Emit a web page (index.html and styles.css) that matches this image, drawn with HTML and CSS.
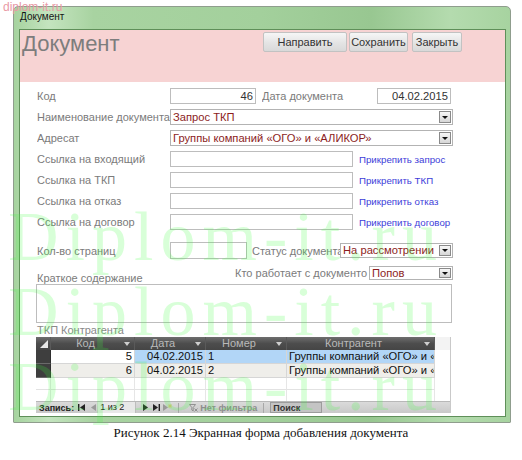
FILE: index.html
```html
<!DOCTYPE html>
<html lang="ru">
<head>
<meta charset="utf-8">
<title>Документ</title>
<link rel="stylesheet" href="styles.css">
</head>
<body>
<div class="page">
  <div class="wm-small">diplom-it.ru</div>
  <div class="window">
    <div class="titlebar">Документ</div>
    <div class="client">
      <div class="header">
        <div class="title">Документ</div>
        <div class="buttons">
          <div class="btn b1">Направить</div>
          <div class="btn b2">Сохранить</div>
          <div class="btn b3">Закрыть</div>
        </div>
      </div>
      <div class="form">
        <div class="row first">
          <div class="lbl">Код</div>
          <div class="fld w86 num">46</div>
          <div class="lbl lbl2">Дата документа</div>
          <div class="fld w74 num">04.02.2015</div>
        </div>
        <div class="row">
          <div class="lbl">Наименование документа</div>
          <div class="combo w283"><div class="v">Запрос ТКП</div><div class="dd"></div></div>
        </div>
        <div class="row">
          <div class="lbl">Адресат</div>
          <div class="combo w283"><div class="v">Группы компаний «ОГО» и «АЛИКОР»</div><div class="dd"></div></div>
        </div>
        <div class="row">
          <div class="lbl">Ссылка на входящий</div>
          <div class="fld w183"></div>
          <div class="link">Прикрепить запрос</div>
        </div>
        <div class="row">
          <div class="lbl">Ссылка на ТКП</div>
          <div class="fld w183"></div>
          <div class="link">Прикрепить ТКП</div>
        </div>
        <div class="row">
          <div class="lbl">Ссылка на отказ</div>
          <div class="fld w183"></div>
          <div class="link">Прикрепить отказ</div>
        </div>
        <div class="row">
          <div class="lbl">Ссылка на договор</div>
          <div class="fld w183"></div>
          <div class="link">Прикрепить договор</div>
        </div>
        <div class="row r8">
          <div class="lbl">Кол-во страниц</div>
          <div class="fld w77"></div>
          <div class="lbl lbl3">Статус документа</div>
          <div class="combo w113 h15"><div class="v">На рассмотрении</div><div class="dd"></div></div>
        </div>
        <div class="r9">
          <div class="kr">Краткое содержание</div>
          <div class="r9g">
            <div class="lbl lbl4">Кто работает с документо</div>
            <div class="combo w84 h14"><div class="v">Попов</div><div class="dd"></div></div>
          </div>
        </div>
        <div class="memo"></div>
        <div class="sublbl">ТКП Контрагента</div>
        <div class="sub">
          <div class="dr dh">
            <div class="hc hsel"><span class="tri"></span></div>
            <div class="hc"><span class="ht">Код</span><span class="arr"></span></div>
            <div class="hc"><span class="ht">Дата</span><span class="arr"></span></div>
            <div class="hc"><span class="ht">Номер</span><span class="arr"></span></div>
            <div class="hc"><span class="ht">Контрагент</span><span class="arr"></span></div>
            <div class="hc hrest"></div>
          </div>
          <div class="dr d1">
            <div class="c csel"></div>
            <div class="c r cw">5</div>
            <div class="c r cb">04.02.2015</div>
            <div class="c cb">1</div>
            <div class="c cb">Группы компаний «ОГО» и «АЛИКОР»</div>
            <div class="c ce"></div>
          </div>
          <div class="dr d2">
            <div class="c csel"></div>
            <div class="c r">6</div>
            <div class="c r">04.02.2015</div>
            <div class="c">2</div>
            <div class="c">Группы компаний «ОГО» и «АЛИКОР»</div>
            <div class="c ce"></div>
          </div>
          <div class="dr de">
            <div class="c"></div><div class="c"></div><div class="c"></div><div class="c"></div><div class="c"></div><div class="c ce"></div>
          </div>
          <div class="dr de">
            <div class="c"></div><div class="c"></div><div class="c"></div><div class="c"></div><div class="c"></div><div class="c ce"></div>
          </div>
          <div class="nav">
            <span class="nl">Запись:</span>
            <svg class="ic i1" width="7" height="7" viewBox="0 0 7 7"><rect x="0" y="0" width="1.4" height="7" fill="#222"/><polygon points="7,0 2,3.5 7,7" fill="#222"/></svg>
            <svg class="ic i2" width="5" height="7" viewBox="0 0 5 7"><polygon points="5,0 0,3.5 5,7" fill="#9a9a9a"/></svg>
            <span class="pos">1 из 2</span>
            <svg class="ic i3" width="5" height="7" viewBox="0 0 5 7"><polygon points="0,0 5,3.5 0,7" fill="#222"/></svg>
            <svg class="ic i4" width="7" height="7" viewBox="0 0 7 7"><polygon points="0,0 5,3.5 0,7" fill="#222"/><rect x="5.6" y="0" width="1.4" height="7" fill="#222"/></svg>
            <svg class="ic i5" width="9" height="7" viewBox="0 0 9 7"><polygon points="0,0 5,3.5 0,7" fill="#9a9a9a"/><path d="M7 0v4M5 2h4M5.6 0.6l2.8 2.8M8.4 0.6l-2.8 2.8" stroke="#d8c27a" stroke-width="0.9"/></svg>
            <span class="sep"></span>
            <svg class="ic i6" width="9" height="8" viewBox="0 0 9 8"><path d="M0.5 0.5h6l-2.3 3v3.5l-1.4 -1v-2.5z" fill="none" stroke="#8a8a8a" stroke-width="0.9"/><path d="M5.5 4.5l3 3M8.5 4.5l-3 3" stroke="#8a8a8a" stroke-width="0.9"/></svg>
            <span class="nf">Нет фильтра</span>
            <span class="sep"></span>
            <span class="srch">Поиск</span>
          </div>
        </div>
      </div>
    </div>
  </div>
  <div class="caption">Рисунок 2.14 Экранная форма добавления документа</div>
  <div class="wm wm1">Diplom-it.ru</div>
  <div class="wm wm2">Diplom-it.ru</div>
  <div class="wm wm3">Diplom-it.ru</div>
</div>
</body>
</html>
```
FILE: styles.css
```css
* { box-sizing: border-box; }
html, body { margin: 0; padding: 0; background: #fff; }
body {
  font-family: "Liberation Sans", Arial, sans-serif;
  width: 522px;
  height: 460px;
  overflow: hidden;
}
.page {
  position: relative;
  width: 522px;
  height: 460px;
  padding-top: 6px;
}
.wm-small {
  position: absolute;
  left: 3px;
  top: 0;
  font-size: 12px;
  line-height: 15px;
  color: #e99aa5;
}
.window {
  margin-left: 13px;
  width: 498px;
  height: 417px;
  border: 1px solid #8f9d8d;
  border-radius: 5px 5px 1px 1px;
  background: linear-gradient(90deg, #a6d39f 0%, #c4e4bf 7%, #a8d3a1 16%, #a3d09c 50%, #98c791 72%, #b4dbae 88%, #a7d3a0 100%);
  padding: 0 4px 5px 5px;
  display: flex;
  flex-direction: column;
}
.titlebar {
  flex: none;
  height: 22px;
  font-size: 10px;
  line-height: 20px;
  padding-left: 1px;
  color: #151515;
}
.client {
  flex: 1;
  border: 1px solid #5f8f59;
  background: #fff;
  display: flex;
  flex-direction: column;
}
.header {
  flex: none;
  height: 52px;
  background: #f7d3d3;
  display: flex;
  padding-left: 2px;
  padding-top: 2px;
}
.title {
  font-size: 22px;
  line-height: 24px;
  color: #7d7d7d;
}
.buttons {
  margin-left: auto;
  margin-right: 43px;
  display: flex;
}
.btn {
  height: 20px;
  border: 1px solid #c2c2c2;
  border-radius: 2px;
  background: linear-gradient(#f6f6f6, #e4e4e4 55%, #d9d9d9);
  font-size: 11px;
  line-height: 18px;
  color: #333;
  text-align: center;
}
.b1 { width: 84px; }
.b2 { width: 59px; margin-left: 2px; }
.b3 { width: 50px; margin-left: 4px; }

.form {
  flex: 1;
  padding-left: 17px;
  display: flex;
  flex-direction: column;
}
.row {
  display: flex;
  align-items: center;
  height: 16px;
  margin-top: 5px;
}
.row.first { margin-top: 6px; }
.lbl {
  flex: none;
  width: 133px;
  font-size: 11px;
  color: #7b7b7b;
  white-space: nowrap;
  overflow: hidden;
}
.lbl2 { width: 115px; margin-left: 6px; }
.lbl3 { width: 88px; margin-left: 5px; }
.fld {
  flex: none;
  height: 16px;
  border: 1px solid #bdbdbd;
  background: #fff;
  font-size: 11.2px;
  line-height: 14px;
  color: #333;
  padding: 0 2px;
}
.num { text-align: right; }
.w86 { width: 86px; }
.w74 { width: 74px; }
.w183 { width: 183px; }
.w77 { width: 77px; height: 17px; }
.link {
  margin-left: 6px;
  font-size: 9.7px;
  color: #3d3dd9;
  white-space: nowrap;
}
.combo {
  flex: none;
  display: flex;
  height: 16px;
  border: 1px solid #b3b3b3;
  background: #fff;
}
.w283 { width: 283px; }
.w113 { width: 113px; }
.w84 { width: 84px; }
.combo.h15 { height: 15px; }
.combo.h14 { height: 14px; }
.combo .v {
  flex: 1;
  padding-left: 2px;
  font-size: 11.2px;
  line-height: 14px;
  color: #8c1d1d;
  white-space: nowrap;
  overflow: hidden;
}
.combo.h15 .v { line-height: 13px; }
.combo.h14 .v { line-height: 12px; }
.combo .dd {
  flex: none;
  width: 12px;
  margin: 1px;
  border: 1px solid #8a8a8a;
  background: linear-gradient(#f7f7f7, #d6d6d6);
  display: flex;
  align-items: center;
  justify-content: center;
}
.combo .dd::after {
  content: "";
  width: 0;
  height: 0;
  border-left: 3px solid transparent;
  border-right: 3px solid transparent;
  border-top: 3px solid #111;
}
.r8 { margin-top: 12px; height: 17px; }
.r9 {
  display: flex;
  height: 18px;
  margin-top: 7px;
}
.kr {
  flex: none;
  width: 196px;
  align-self: flex-end;
  font-size: 11px;
  line-height: 12px;
  color: #7b7b7b;
  white-space: nowrap;
}
.r9g {
  display: flex;
  align-items: center;
  height: 14px;
}
.lbl4 { width: 136px; text-align: right; padding-right: 2px; }
.memo {
  flex: none;
  margin-left: -1px;
  width: 416px;
  height: 39px;
  border: 1px solid #bdbdbd;
  background: #fff;
}
.sublbl {
  flex: none;
  height: 14px;
  font-size: 11px;
  line-height: 14px;
  color: #8a8a8a;
}
.sub {
  flex: none;
  margin-left: -1px;
  width: 415px;
  border-right: 1px solid #c9c9c9;
  display: flex;
  flex-direction: column;
}
.dr {
  display: grid;
  grid-template-columns: 15px 84px 71px 81px 148px 1fr;
}
.dh { height: 13px; }
.hc {
  background: linear-gradient(#6e6e6e, #4d4d4d 50%, #454545);
  display: flex;
  align-items: center;
  font-size: 11px;
  line-height: 13px;
  color: #b9b9b9;
  border-right: 1px solid #5a5a5a;
}
.hc .ht { flex: 1; text-align: center; }
.hc .arr {
  flex: none;
  width: 14px;
  display: flex;
  justify-content: center;
}
.hc .arr::after {
  content: "";
  width: 0;
  height: 0;
  border-left: 3px solid transparent;
  border-right: 3px solid transparent;
  border-top: 4px solid #cfcfcf;
}
.hsel { justify-content: flex-end; align-items: flex-end; padding: 0 2px 2px 0; }
.tri {
  width: 0;
  height: 0;
  border-left: 8px solid transparent;
  border-bottom: 8px solid #e8e8e8;
}
.hrest { background: #f3f3f3; border-right: none; }
.c {
  font-size: 11.2px;
  line-height: 13px;
  color: #111;
  white-space: nowrap;
  overflow: hidden;
  padding: 0 2px;
  border-right: 1px solid #d6d6d6;
  border-bottom: 1px solid #d6d6d6;
}
.r { text-align: right; }
.d1, .d2 { height: 14px; }
.csel { background: #3e3e3e; border-right: 1px solid #2e2e2e; border-bottom: 1px solid #6a6a6a; }
.cb { background: #b2d6f7; }
.cw { background: #fff; }
.d2 .c { background: #efeeea; }
.d2 .csel { background: #3e3e3e; }
.ce, .d2 .ce { background: #fff; border-right: none; border-bottom: none; }
.de { height: 12px; }
.de .c { background: #fff; border-bottom: 1px solid #e2e2e2; border-right: 1px solid #e6e6e6; }
.de .ce { border: none; }
.nav {
  height: 12px;
  margin-top: -1px;
  background: linear-gradient(#dadada, #c9c9c9);
  border-top: 1px solid #b8b8b8;
  display: flex;
  align-items: center;
  font-size: 9px;
  color: #222;
  padding-left: 3px;
}
.nl { font-weight: bold; margin-right: 3px; }
.ic { flex: none; }
.i1 { margin-left: 1px; }
.i2 { margin-left: 6px; }
.pos {
  margin-left: 2px;
  width: 38px;
  height: 11px;
  line-height: 11px;
  padding-left: 2px;
  background: #e8e8e8;
  border-right: 1px solid #bdbdbd;
  font-size: 9px;
}
.i3 { margin-left: 7px; }
.i4 { margin-left: 5px; }
.i5 { margin-left: 3px; }
.sep {
  width: 1px;
  height: 10px;
  background: #a8a8a8;
  margin: 0 6px;
}
.i6 { margin-left: 4px; margin-right: 2px; }
.nf { color: #8d8d8d; font-weight: bold; }
.srch {
  width: 52px;
  height: 11px;
  line-height: 11px;
  background: #c4c4c4;
  border: 1px solid #9c9c9c;
  padding-left: 2px;
  font-weight: bold;
  color: #333;
}
.caption {
  margin-top: 2px;
  text-align: center;
  font-family: "Liberation Serif", "Times New Roman", serif;
  font-size: 13px;
  line-height: 16px;
  color: #111;
}
.wm {
  position: absolute;
  left: 8px;
  font-family: "Liberation Serif", "Times New Roman", serif;
  font-size: 70px;
  letter-spacing: 7px;
  line-height: 70px;
  color: rgba(60, 255, 60, 0.2);
  white-space: nowrap;
  pointer-events: none;
}
.wm1 { top: 202px; }
.wm2 { top: 277px; }
.wm3 { top: 352px; }
```
